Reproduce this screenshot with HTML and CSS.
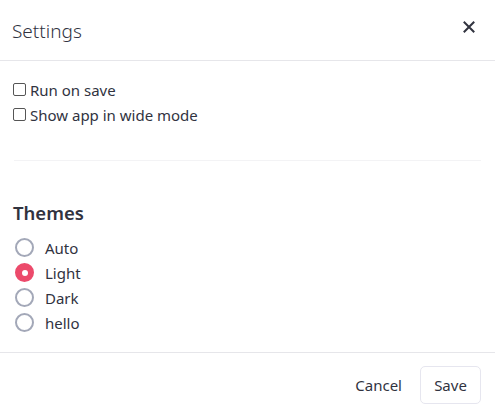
FILE: index.html
```html
<!DOCTYPE html>
<html>
<head>
<meta charset="utf-8">
<link rel="stylesheet" href="styles.css">
</head>
<body>
<div class="modal">
  <div class="header">
    <span class="title">Settings</span>
    <button class="close" aria-label="Close">
      <svg width="12" height="12" viewBox="0 0 12 12"><path d="M1.5 1.5L10.5 10.5M10.5 1.5L1.5 10.5" stroke="#31333f" stroke-width="2" stroke-linecap="square"/></svg>
    </button>
  </div>
  <div class="body">
    <label class="check"><span class="box"></span>Run on save</label>
    <label class="check"><span class="box"></span>Show app in wide mode</label>
    <hr class="divider">
    <div class="themes-title">Themes</div>
    <div class="radios">
      <label class="radio"><span class="dot"></span>Auto</label>
      <label class="radio"><span class="dot on"></span>Light</label>
      <label class="radio"><span class="dot"></span>Dark</label>
      <label class="radio"><span class="dot"></span>hello</label>
    </div>
  </div>
  <div class="footer">
    <button class="btn cancel">Cancel</button>
    <button class="btn save">Save</button>
  </div>
</div>
</body>
</html>
```
FILE: styles.css
```css
html, body {
  margin: 0;
  padding: 0;
  background: #fff;
}
body {
  font-family: "Noto Sans", "Open Sans", sans-serif;
  color: #31333f;
}
.modal {
  width: 495px;
  height: 412px;
  display: flex;
  flex-direction: column;
}
.header {
  height: 60px;
  border-bottom: 1px solid #e6e6ea;
  display: flex;
  align-items: center;
  justify-content: space-between;
  padding: 0 20px 0 12px;
}
.title {
  font-size: 19px;
  font-weight: 300;
  margin-top: 2px;
}
.close {
  background: none;
  border: none;
  padding: 0;
  width: 12px;
  height: 12px;
  display: flex;
  margin-top: -6px;
}
.body {
  padding: 16px 13px 0 13px;
  flex: 1;
}
.check {
  display: flex;
  align-items: center;
  height: 25px;
  font-size: 15px;
}
.box {
  width: 11px;
  height: 11px;
  border: 1px solid #555;
  border-radius: 2px;
  margin-right: 4px;
  margin-left: 0;
}
.divider {
  border: none;
  border-top: 1px solid #f3f3f5;
  margin: 33px 1px 0 1px;
}
.themes-title {
  font-size: 18.5px;
  font-weight: 600;
  margin-top: 39px;
  line-height: 30px;
  height: 30px;
  margin-bottom: 5px;
  position: relative;
  top: -2px;
}
.radio {
  display: flex;
  align-items: center;
  height: 25px;
  font-size: 15px;
}
.dot {
  width: 15px;
  height: 15px;
  border: 2px solid #a3a8b8;
  border-radius: 50%;
  margin: 0 11px 0 2px;
  box-sizing: content-box;
  position: relative;
}
.dot.on {
  border-color: #ec4a6b;
  background: #ec4a6b;
}
.dot.on::after {
  content: "";
  position: absolute;
  left: 50%;
  top: 50%;
  width: 6px;
  height: 6px;
  margin: -3px 0 0 -3px;
  border-radius: 50%;
  background: #fff;
}
.footer {
  height: 59px;
  border-top: 1px solid #e6e6ea;
  display: flex;
  justify-content: flex-end;
  align-items: center;
  padding: 0 14px 0 0;
  gap: 5px;
}
.btn {
  font-family: inherit;
  font-size: 15px;
  color: #31333f;
  background: #fff;
  border: 1px solid transparent;
  border-radius: 5px;
  height: 38px;
  padding: 0 12px;
  margin-top: 4px;
}
.save {
  border-color: #e6e6ef;
  width: 61px;
}
```
